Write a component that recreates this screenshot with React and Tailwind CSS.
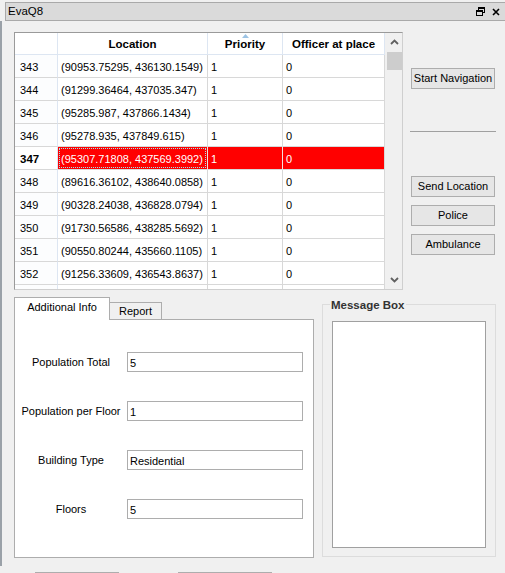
import React from "react";

const rows = [
  ["343", "(90953.75295, 436130.1549)"],
  ["344", "(91299.36464, 437035.347)"],
  ["345", "(95285.987, 437866.1434)"],
  ["346", "(95278.935, 437849.615)"],
  ["347", "(95307.71808, 437569.3992)"],
  ["348", "(89616.36102, 438640.0858)"],
  ["349", "(90328.24038, 436828.0794)"],
  ["350", "(91730.56586, 438285.5692)"],
  ["351", "(90550.80244, 435660.1105)"],
  ["352", "(91256.33609, 436543.8637)"],
];

const fields = [
  ["Population Total", "5"],
  ["Population per Floor", "1"],
  ["Building Type", "Residential"],
  ["Floors", "5"],
];

function Btn({ children }) {
  return (
    <button className="h-[21px] w-[84px] border border-[#adadad] bg-[#e6e6e6] text-[11px] text-black leading-none">
      {children}
    </button>
  );
}

function Row({ num, loc, selected }) {
  if (selected) {
    return (
      <div className="flex h-[23px] shrink-0">
        <div className="w-[43px] border-r border-b border-r-[#dde6f2] border-b-[#d8d8d8] bg-white pl-[5px] pt-[3px] flex items-center font-bold text-[11.5px]">
          {num}
        </div>
        <div className="w-[150px] border-r border-b border-r-[#f4dede] border-b-[#d8d8d8] bg-[#ff0000] p-px">
          <div className="h-full border border-dotted border-[#9fe3ee] pl-[1px] pt-[2px] flex items-center text-white">{loc}</div>
        </div>
        <div className="w-[75px] border-r border-b border-r-[#f4dede] border-b-[#d8d8d8] bg-[#ff0000] pl-[3px] pt-[3px] flex items-center text-white">1</div>
        <div className="w-[102px] border-r border-b border-r-[#d8d8d8] border-b-[#d8d8d8] bg-[#ff0000] pl-[3px] pt-[3px] flex items-center text-white">0</div>
      </div>
    );
  }
  return (
    <div className="flex h-[23px] shrink-0">
      <div className="w-[43px] border-r border-b border-r-[#dde6f2] border-b-[#d8d8d8] bg-[#fcfdfe] pl-[5px] pt-[3px] flex items-center">{num}</div>
      <div className="w-[150px] border-r border-b border-[#d8d8d8] pl-[3px] pt-[3px] flex items-center">{loc}</div>
      <div className="w-[75px] border-r border-b border-[#d8d8d8] pl-[3px] pt-[3px] flex items-center">{num ? "1" : ""}</div>
      <div className="w-[102px] border-r border-b border-[#d8d8d8] pl-[3px] pt-[3px] flex items-center">{num ? "0" : ""}</div>
    </div>
  );
}

export default function App() {
  return (
    <div className="relative w-[505px] h-[573px] overflow-hidden bg-[#f0f0f0] text-[11px] text-black font-['Liberation_Sans',Arial,sans-serif]">
      {/* title bar */}
      <div className="mt-[2px] ml-[5px] h-[19px] border-t border-l border-b border-[#a9a9a9] bg-[#dadada] flex items-center justify-between pl-[2px] pr-[5px]">
        <span className="text-[11.5px]">EvaQ8</span>
        <div className="flex items-center gap-[7px]">
          <svg width="9" height="9" viewBox="0 0 9 9">
            <rect x="2.5" y="0.5" width="6" height="5" fill="none" stroke="#000" />
            <rect x="2" y="0" width="7" height="2" fill="#000" />
            <rect x="0.5" y="3.5" width="6" height="5" fill="#dadada" stroke="#000" />
            <rect x="0" y="3" width="7" height="2" fill="#000" />
          </svg>
          <svg width="8" height="8" viewBox="0 0 8 8">
            <path d="M1 1 L7 7 M7 1 L1 7" stroke="#000" strokeWidth="1.6" />
          </svg>
        </div>
      </div>

      <div className="flex">
        <div className="w-[2px] h-[545px] bg-[#9aa1a8]" />
        <div className="flex flex-col pl-[12px]">
          {/* table + buttons */}
          <div className="flex mt-[11px]">
            <div className="w-[389px] h-[258px] border border-t-[#9a9a9a] border-l-[#9a9a9a] border-r-[#cfcfcf] border-b-[#cfcfcf] bg-white flex overflow-hidden">
              <div className="w-[370px] flex flex-col">
                <div className="flex h-[22px] shrink-0 font-bold text-[11.5px]">
                  <div className="w-[43px] border-r border-b border-[#dde6f2]" />
                  <div className="w-[150px] border-r border-b border-[#dde6f2] pt-[3px] flex items-center justify-center">Location</div>
                  <div className="relative w-[75px] border-r border-b border-[#dde6f2] pt-[3px] flex items-center justify-center">
                    <svg className="absolute top-[1px] left-[34px]" width="7" height="4" viewBox="0 0 7 4">
                      <path d="M0 4 L3.5 0 L7 4 Z" fill="#9cc3e4" />
                    </svg>
                    Priority
                  </div>
                  <div className="w-[102px] border-r border-b border-[#dde6f2] pt-[3px] flex items-center justify-center">Officer at place</div>
                </div>
                {rows.map(([n, l]) => (
                  <Row key={n} num={n} loc={l} selected={n === "347"} />
                ))}
                <Row num="" loc="" />
              </div>
              {/* scrollbar */}
              <div className="w-[17px] bg-[#f0f0f0] flex flex-col items-center border-l border-[#f0f0f0]">
                <svg className="mt-[6px]" width="9" height="6" viewBox="0 0 9 6">
                  <path d="M1 5 L4.5 1.5 L8 5" fill="none" stroke="#606060" strokeWidth="1.8" />
                </svg>
                <div className="mt-[7px] w-[15px] h-[18px] bg-[#cdcdcd]" />
                <div className="flex-1" />
                <svg className="mb-[6px]" width="9" height="6" viewBox="0 0 9 6">
                  <path d="M1 1 L4.5 4.5 L8 1" fill="none" stroke="#606060" strokeWidth="1.8" />
                </svg>
              </div>
            </div>
            <div className="ml-[8px] flex flex-col">
              <div className="mt-[36px]">
                <Btn>Start Navigation</Btn>
              </div>
              <div className="mt-[42px] -ml-[1px] w-[86px] h-px bg-[#a0a0a0]" />
              <div className="mt-[44px] flex flex-col gap-[8px]">
                <Btn>Send Location</Btn>
                <Btn>Police</Btn>
                <Btn>Ambulance</Btn>
              </div>
            </div>
          </div>

          {/* tabs + message box */}
          <div className="flex mt-[7px]">
            <div className="w-[300px] flex flex-col">
              <div className="flex items-end h-[22px]">
                <div className="relative z-10 -mb-px h-[23px] w-[96px] border border-b-0 border-[#adadad] bg-white flex items-center justify-center pb-[3px]">
                  Additional Info
                </div>
                <div className="h-[17px] w-[53px] -ml-px border border-b-0 border-[#adadad] bg-[#f0f0f0] flex items-center justify-center pt-[1px]">
                  Report
                </div>
              </div>
              <div className="h-[239px] border border-[#adadad] bg-white flex flex-col gap-[29px] pt-[32px]">
                {fields.map(([label, value]) => (
                  <div key={label} className="flex items-center h-[20px]">
                    <div className="w-[112px] text-center pt-[1px]">{label}</div>
                    <div className="w-[176px] h-[20px] border border-[#adadad] bg-white pl-[2px] pt-[2px] flex items-center">
                      {value}
                    </div>
                  </div>
                ))}
              </div>
            </div>
            <div className="relative ml-[8px] mt-[7px] w-[174px] h-[253px] border border-[#dcdcdc] pt-[16px] pl-[9px]">
              <span className="absolute -top-[8px] left-[7px] bg-[#f0f0f0] px-px font-bold text-[11.5px] text-[#333]">
                Message Box
              </span>
              <div className="w-[154px] h-[227px] border border-[#a0a0a0] bg-white" />
            </div>
          </div>

          {/* partially visible controls at the bottom */}
          <div className="flex mt-[14px]">
            <div className="ml-[21px] w-[84px] h-[21px] border border-[#adadad] bg-[#e6e6e6]" />
            <div className="ml-[59px] w-[94px] h-[21px] border border-[#adadad] bg-white flex justify-end">
              <div className="w-[15px] h-full bg-[#c8c8c8]" />
            </div>
          </div>
        </div>
      </div>
    </div>
  );
}
